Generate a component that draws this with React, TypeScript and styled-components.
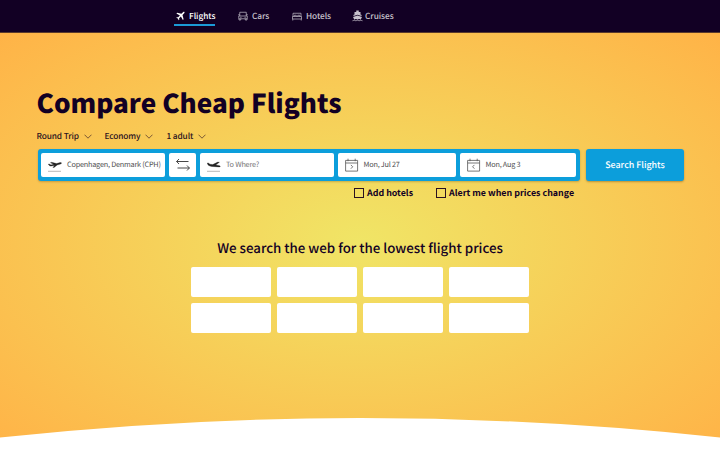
import { useState } from "react";
import styled, { createGlobalStyle } from "styled-components";

const GlobalStyle = createGlobalStyle`
  * {
    box-sizing: border-box;
  }
  body {
    margin: 0;
    overflow: hidden;
    background-color: #ffffff;
    color: #120024;
    font-family: "Noto Sans CJK SC", "Noto Sans", sans-serif;
    text-rendering: geometricPrecision;
  }
  button, input {
    font-family: inherit;
    text-rendering: inherit;
  }
`;

const Page = styled.div`
  height: 450px;
  display: flex;
  flex-direction: column;
`;

const Header = styled.header`
  height: 33px;
  flex-shrink: 0;
  padding-left: 174px;
  border-bottom: 1px solid #5a3a2c;
  background-color: #120024;
`;

const Nav = styled.nav`
  height: 26px;
  display: flex;
`;

const NavItem = styled.a<{ $width: number; $gap?: number; $active?: boolean }>`
  width: ${(props) => props.$width}px;
  height: 26px;
  padding: 8px 0 0 2px;
  display: flex;
  align-items: center;
  gap: ${(props) => props.$gap ?? 4}px;
  border-bottom: 2px solid ${(props) => (props.$active ? "#1b9ad6" : "transparent")};
  color: ${(props) => (props.$active ? "#ffffff" : "#c6c0cb")};
  font-size: 8.3px;
  font-weight: 500;
  letter-spacing: -0.05px;
  line-height: 14px;
  white-space: nowrap;
  margin-right: 21px;
  svg {
    flex-shrink: 0;
  }
`;

const Hero = styled.main`
  flex: 1;
  display: flex;
  flex-direction: column;
  background: radial-gradient(ellipse farthest-corner at 50% 50%, #f0e566, #ffb347);
`;

const Title = styled.h1`
  margin: 49px 0 0 36.5px;
  font-size: 26.1px;
  font-weight: 900;
  line-height: 40px;
  white-space: nowrap;
`;

const Options = styled.div`
  display: flex;
  height: 12px;
  margin: 8px 0 0 36.5px;
`;

const Option = styled.button<{ $width: number }>`
  width: ${(props) => props.$width}px;
  padding: 0;
  border: none;
  background: none;
  display: flex;
  align-items: center;
  gap: 5px;
  color: #2b1220;
  font-size: 8.3px;
  font-weight: 500;
  letter-spacing: -0.12px;
  line-height: 12px;
  white-space: nowrap;
`;

const SearchRow = styled.div`
  display: flex;
  gap: 6px;
  margin: 7px 0 0 37.5px;
`;

const Fields = styled.div`
  width: 542.5px;
  height: 32px;
  padding: 4px 4px 4px 3.5px;
  display: flex;
  gap: 4px;
  border-radius: 3px;
  background-color: #0c9edb;
  box-shadow: 0 1px 2px rgba(60, 40, 0, 0.25);
`;

const Field = styled.div<{ $width: number; $muted?: boolean }>`
  width: ${(props) => props.$width}px;
  padding-left: 7px;
  display: flex;
  align-items: center;
  gap: 5px;
  border-radius: 2px;
  background-color: #ffffff;
  color: ${(props) => (props.$muted ? "#777777" : "#4f4f4f")};
  font-size: 7.3px;
  letter-spacing: -0.22px;
  line-height: 12px;
  white-space: nowrap;
  svg {
    flex-shrink: 0;
  }
`;

const SubmitButton = styled.button`
  width: 98px;
  height: 32px;
  padding: 0 0 1px;
  border: none;
  border-radius: 3px;
  background-color: #0c9edb;
  box-shadow: 0 1px 2px rgba(60, 40, 0, 0.35);
  color: #ffffff;
  font-size: 8.9px;
  font-weight: 500;
`;

const Extras = styled.div`
  display: flex;
  gap: 23px;
  height: 12px;
  margin: 6px 0 0 354px;
`;

const Check = styled.label`
  display: flex;
  align-items: center;
  gap: 3px;
  font-size: 8.9px;
  font-weight: 700;
  line-height: 12px;
  white-space: nowrap;
  input {
    appearance: none;
    width: 10px;
    height: 10px;
    margin: 0;
    border: 1px solid #2b1220;
  }
  input:checked {
    background-color: #2b1220;
  }
`;

const Subtitle = styled.h2`
  margin: 39px 0 0;
  font-size: 13.3px;
  font-weight: 500;
  line-height: 20px;
  text-align: center;
  white-space: nowrap;
`;

const Partners = styled.div`
  display: grid;
  grid-template-columns: repeat(4, 80px);
  grid-auto-rows: 30px;
  gap: 6px;
  justify-content: center;
  margin-top: 9px;
`;

const Partner = styled.div`
  border-radius: 2px;
  background-color: #ffffff;
`;

const Curve = styled.svg`
  display: block;
  width: 720px;
  height: 32px;
  margin-top: auto;
`;

const PlaneIcon = () => (
  <svg width="9" height="10" viewBox="0 0 18 20" fill="currentColor">
    <path d="M14 2.4c1-.9 2.4-1.1 2.9-.6s.3 1.900-.6 2.900l-3.300 3.300 2.200 8.600-1.500 1.500-3.900-6.900-3.600 3.500.4 2.600-1.200 1.200-1.700-3.300L.5 13.500l1.200-1.200 2.600.4 3.500-3.600L.8 5.200l1.500-1.500 8.500 2z" />
  </svg>
);

const CarIcon = () => (
  <svg width="10" height="10" viewBox="0 0 20 20" fill="none" stroke="currentColor" strokeWidth="1.4">
    <path d="M3.500 10V2.500h13V10M1.500 10h17v5.500h-17zM2 15.500V18h3.500v-2.500M14.500 15.500V18H18v-2.500M.5 7.500h3M16.500 7.500h3M4.500 12.700H7M13 12.700h2.500" />
  </svg>
);

const BedIcon = () => (
  <svg width="10" height="9" viewBox="0 0 20 18" fill="none" stroke="currentColor" strokeWidth="1.4">
    <path d="M2 9V2.500h16V9M1 9h18v5H1zM1.500 14v3M18.500 14v3M4.500 9V6.500h4V9M11.500 9V6.500h4V9" />
  </svg>
);

const ShipIcon = () => (
  <svg width="11" height="12" viewBox="0 0 22 24" fill="currentColor">
    <path d="M8.500 1h5v3h3.500v5l2.500 1-.8 2L11 9.500 3.300 12l-.8-2L5 9V4h3.500zM11 11l9 3-2.500 5c-1.500 0-2-1-3.200-1S12.500 19 11 19s-2-1-3.300-1-1.700 1-3.200 1L2 14z" />
    <path d="M1 21.500c2 0 2-1 3.500-1s2 1 3.300 1 2-1 3.200-1 2 1 3.200 1 2-1 3.300-1 1.500 1 3.500 1" fill="none" stroke="currentColor" strokeWidth="1.500" />
  </svg>
);

const Chevron = () => (
  <svg width="8" height="5" viewBox="0 0 8 5" fill="none" stroke="#5a3b2c" strokeWidth="0.8">
    <path d="m.5.7 3.500 3.500L7.500.7" />
  </svg>
);

const TakeoffIcon = () => (
  <svg width="14" height="14" viewBox="0 0 14 14">
    <path d="m.2 6.200 1-.2L3 6.900l2.600-.6-3.200-1.600 1.400-.4 4.700 1.300 2.700-.8c1-.3 2.100-.3 2.300.2s-.8 1-1.700 1.300l-2.600.7-3.100 2.400-1.200.1 1.600-2.100-3 .6c-.9.2-1.500.1-1.900-.3z" fill="#222222" stroke="#222222" strokeWidth="0.300" />
    <path d="M0 13.300h13" stroke="#999999" strokeWidth="0.700" />
  </svg>
);

const LandingIcon = () => (
  <svg width="14" height="14" viewBox="0 0 14 14">
    <path d="m.2 5.100 1.100-.1L3 6.200l2.700.4 5.100-2.500 1.600.2-3.700 2.700 3.100.4c1 .2 1.600.6 1.500 1s-1.100.6-2 .5L4.600 8.400 2.900 8c-1-.3-1.600-.7-2-1.300z" fill="#222222" stroke="#222222" strokeWidth="0.300" />
    <path d="M0 13.300h13" stroke="#999999" strokeWidth="0.700" />
  </svg>
);

const SwapIcon = () => (
  <svg width="14" height="14" viewBox="0 0 14 14" fill="none" stroke="#333333" strokeWidth="0.900">
    <path d="M12.500 3.500H.6M3 1 .6 3.500 3 6M1.500 10h12M11 7.500l2.400 2.500L11 12.500" />
  </svg>
);

const CalendarIcon = ({ back }: { back?: boolean }) => (
  <svg width="13.5" height="14" viewBox="0 0 13.5 14" fill="none" stroke="#555555" strokeWidth="0.800">
    <path d="M.6 2.400h12v10.700H.6zM.6 5h12M3 .7v2.500M10.200.7v2.500" />
    <path d={back ? "M7.400 6.900 5.600 8.800l1.800 1.900" : "m5.900 6.900 1.800 1.900-1.800 1.900"} />
  </svg>
);

function App() {
  const [hotels, setHotels] = useState(false);
  const [alerts, setAlerts] = useState(false);
  return (
    <Page>
      <GlobalStyle />
      <Header>
        <Nav>
          <NavItem $width={41} $active><PlaneIcon />Flights</NavItem>
          <NavItem $width={33}><CarIcon />Cars</NavItem>
          <NavItem $width={39}><BedIcon />Hotels</NavItem>
          <NavItem $width={43} $gap={2}><ShipIcon />Cruises</NavItem>
        </Nav>
      </Header>
      <Hero>
        <Title>Compare Cheap Flights</Title>
        <Options>
          <Option $width={68}>Round Trip<Chevron /></Option>
          <Option $width={62}>Economy<Chevron /></Option>
          <Option $width={50}>1 adult<Chevron /></Option>
        </Options>
        <SearchRow>
          <Fields>
            <Field $width={124}><TakeoffIcon />Copenhagen, Denmark (CPH)</Field>
            <Field $width={27}><SwapIcon /></Field>
            <Field $width={134} $muted><LandingIcon />To Where?</Field>
            <Field $width={118}><CalendarIcon />Mon, Jul 27</Field>
            <Field $width={116}><CalendarIcon back />Mon, Aug 3</Field>
          </Fields>
          <SubmitButton>Search Flights</SubmitButton>
        </SearchRow>
        <Extras>
          <Check>
            <input type="checkbox" checked={hotels} onChange={() => setHotels(!hotels)} />
            Add hotels
          </Check>
          <Check>
            <input type="checkbox" checked={alerts} onChange={() => setAlerts(!alerts)} />
            Alert me when prices change
          </Check>
        </Extras>
        <Subtitle>We search the web for the lowest flight prices</Subtitle>
        <Partners>
          {Array.from({ length: 8 }, (_, i) => <Partner key={i} />)}
        </Partners>
        <Curve viewBox="0 0 720 32">
          <path d="M0 19.500Q360-19.500 720 19.500V32H0z" fill="#ffffff" />
        </Curve>
      </Hero>
    </Page>
  );
}

export default App;
